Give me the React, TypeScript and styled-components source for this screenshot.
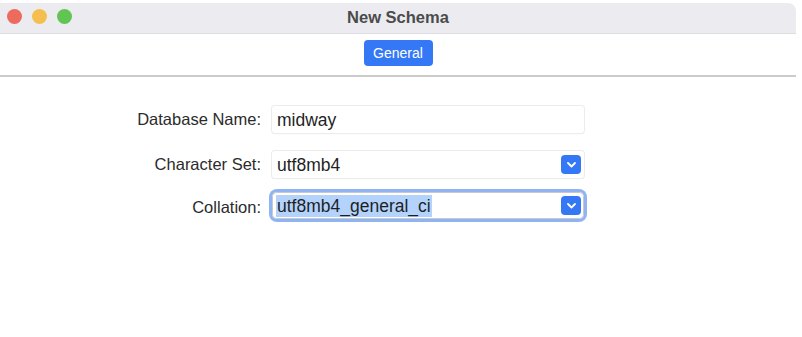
import React from 'react';
import styled, { createGlobalStyle } from 'styled-components';

const GlobalStyle = createGlobalStyle`
  html, body {
    margin: 0;
    padding: 0;
    background: #ffffff;
    font-family: "Liberation Sans", Arial, sans-serif;
  }
`;

const Window = styled.div`
  width: 796px;
  height: 337px;
  padding-top: 3px;
  box-sizing: border-box;
  background: #ffffff;
`;

const TitleBar = styled.div`
  position: relative;
  height: 30px;
  background: #ecebf0;
  border-bottom: 1px solid #dddce1;
  border-top-right-radius: 8px;
  display: flex;
  align-items: center;
  justify-content: center;
`;

const Lights = styled.div`
  position: absolute;
  left: 7px;
  top: 6px;
  display: flex;
  gap: 10px;
`;

const Light = styled.span<{ $color: string }>`
  width: 15px;
  height: 15px;
  border-radius: 50%;
  background: ${(p) => p.$color};
`;

const Title = styled.div`
  font-size: 16.5px;
  font-weight: bold;
  color: #4b4b4b;
  margin-top: -2px;
`;

const Toolbar = styled.div`
  display: flex;
  justify-content: center;
  padding: 6px 0 9px;
  border-bottom: 2px solid #cbcbcb;
`;

const TabButton = styled.button`
  width: 69px;
  height: 26px;
  border: none;
  border-radius: 4px;
  background: #3478f6;
  color: #ffffff;
  font-family: "Liberation Sans", Arial, sans-serif;
  font-size: 14px;
  padding: 0;
`;

const Form = styled.div`
  display: grid;
  grid-template-columns: 261px 312px;
  column-gap: 11px;
  row-gap: 18px;
  align-items: center;
  padding-top: 29px;
`;

const Label = styled.div`
  text-align: right;
  font-size: 16.5px;
  color: #2b2b2b;
`;

const Field = styled.div<{ $focused?: boolean }>`
  height: 27px;
  box-sizing: border-box;
  display: flex;
  align-items: center;
  justify-content: space-between;
  padding: 0 3px 0 4px;
  background: #ffffff;
  margin-top: ${(p) => (p.$focused ? '-4px' : '0')};
  border-radius: ${(p) => (p.$focused ? '5px' : '3px')};
  box-shadow: ${(p) =>
    p.$focused
      ? '0 0 0 3px #8fb4f4, 0 0 0 1px #c9c9c9 inset'
      : '0 0 0 1px #ececec, 0 1px 1px rgba(0,0,0,0.12)'};
  font-size: 17.5px;
  color: #1f1f1f;
`;

const Value = styled.span<{ $selected?: boolean }>`
  background: ${(p) => (p.$selected ? '#b3d3fd' : 'transparent')};
  line-height: 22px;
  padding: 0 1px;
`;

const Chevron = styled.span`
  width: 20px;
  height: 19px;
  border-radius: 4px;
  background: #3478f6;
  display: flex;
  align-items: center;
  justify-content: center;
`;

const ChevronIcon = () => (
  <svg width="9" height="6" viewBox="0 0 9 6">
    <path d="M1 1l3.5 3.5L8 1" fill="none" stroke="#fff" strokeWidth="1.8" strokeLinecap="round" strokeLinejoin="round" />
  </svg>
);

export default function App() {
  return (
    <>
      <GlobalStyle />
      <Window>
        <TitleBar>
          <Lights>
            <Light $color="#ed6a5e" />
            <Light $color="#f5bf4f" />
            <Light $color="#61c554" />
          </Lights>
          <Title>New Schema</Title>
        </TitleBar>
        <Toolbar>
          <TabButton>General</TabButton>
        </Toolbar>
        <Form>
          <Label>Database Name:</Label>
          <Field>
            <Value>midway</Value>
          </Field>
          <Label>Character Set:</Label>
          <Field>
            <Value>utf8mb4</Value>
            <Chevron>
              <ChevronIcon />
            </Chevron>
          </Field>
          <Label>Collation:</Label>
          <Field $focused>
            <Value $selected>utf8mb4_general_ci</Value>
            <Chevron>
              <ChevronIcon />
            </Chevron>
          </Field>
        </Form>
      </Window>
    </>
  );
}
